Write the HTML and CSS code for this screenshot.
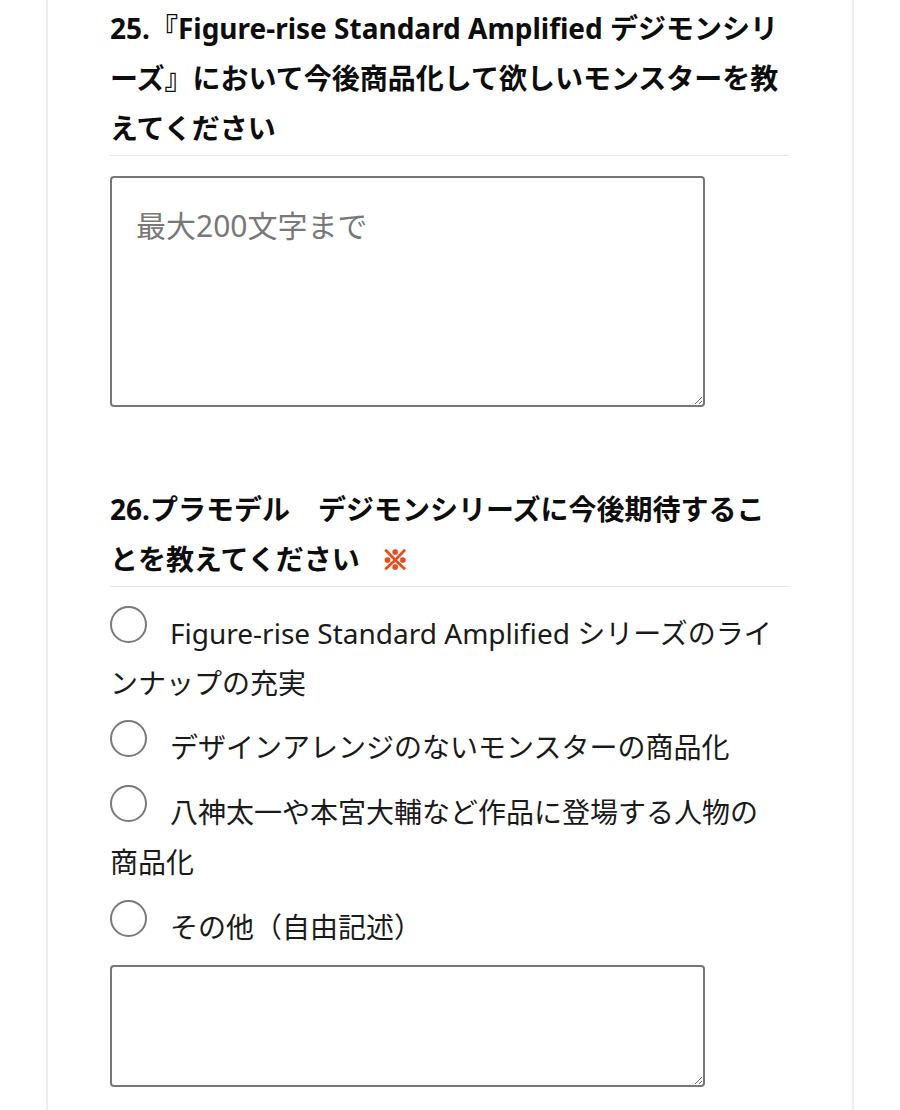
FILE: index.html
```html
<!DOCTYPE html>
<html lang="ja">
<head>
<meta charset="utf-8">
<title>アンケート</title>
<link rel="stylesheet" href="styles.css">
</head>
<body>
<div class="page">
  <section class="question q25">
    <h2 class="q-title">25.『Figure-rise Standard Amplified デジモンシリーズ』において今後商品化して欲しいモンスターを教えてください</h2>
    <textarea class="answer answer-large" placeholder="最大200文字まで"></textarea>
  </section>

  <section class="question q26">
    <h2 class="q-title">26.プラモデル　デジモンシリーズに今後期待することを教えてください<span class="req">※</span></h2>
    <div class="options">
      <label class="option"><span class="radio"></span>Figure-rise Standard Amplified シリーズのラインナップの充実</label>
      <label class="option"><span class="radio"></span>デザインアレンジのないモンスターの商品化</label>
      <label class="option"><span class="radio"></span>八神太一や本宮大輔など作品に登場する人物の商品化</label>
      <label class="option"><span class="radio"></span>その他（自由記述）</label>
    </div>
    <textarea class="answer answer-small"></textarea>
  </section>
</div>
</body>
</html>
```

FILE: styles.css
```css
html, body {
  margin: 0;
  padding: 0;
  background: #ffffff;
}

body {
  font-family: "Noto Sans", "Noto Sans CJK JP", sans-serif;
  color: #111111;
}

.page {
  margin: 0 46px;
  padding: 0 62px;
  border-left: 2px solid #eeeeee;
  border-right: 2px solid #eeeeee;
  min-height: 1110px;
  box-sizing: border-box;
}

.question.q25 {
  padding-top: 3px;
}

.question.q26 {
  margin-top: 77px;
}

.q-title {
  margin: 0;
  font-size: 28px;
  font-weight: 700;
  line-height: 50px;
  padding-bottom: 2px;
  border-bottom: 1px solid #e6e6e6;
  color: #0d0d0d;
}

.req {
  color: #e84b1c;
  font-family: "Noto Sans CJK JP", sans-serif;
  font-size: 27px;
  font-weight: 900;
  -webkit-text-stroke: 1.6px #e84b1c;
  margin-left: 22px;
}

.answer {
  display: block;
  box-sizing: border-box;
  width: 595px;
  margin: 20px 0 0;
  border: 2px solid #777777;
  border-radius: 4px;
  padding: 25px 24px 20px;
  font-family: "Noto Sans", "Noto Sans CJK JP", sans-serif;
  font-size: 30px;
  line-height: 1.5;
  color: #222222;
  background: #ffffff;
  outline: none;
}

.answer::placeholder {
  color: #787878;
}

.answer-large {
  height: 231px;
}

.answer-small {
  height: 122px;
  margin-top: 0;
}

.options {
  margin-top: 21px;
  padding-right: 8px;
}

.option {
  display: block;
  font-size: 28px;
  line-height: 50px;
  margin-bottom: 15px;
  color: #1a1a1a;
}

.option:first-child {
  margin-bottom: 14px;
}

.option:last-child {
  margin-bottom: 13px;
}

.radio {
  display: inline-block;
  box-sizing: border-box;
  width: 37px;
  height: 37px;
  border: 2px solid #7a7a7a;
  border-radius: 50%;
  vertical-align: top;
  margin: -2px 23px 0 0;
}
```
